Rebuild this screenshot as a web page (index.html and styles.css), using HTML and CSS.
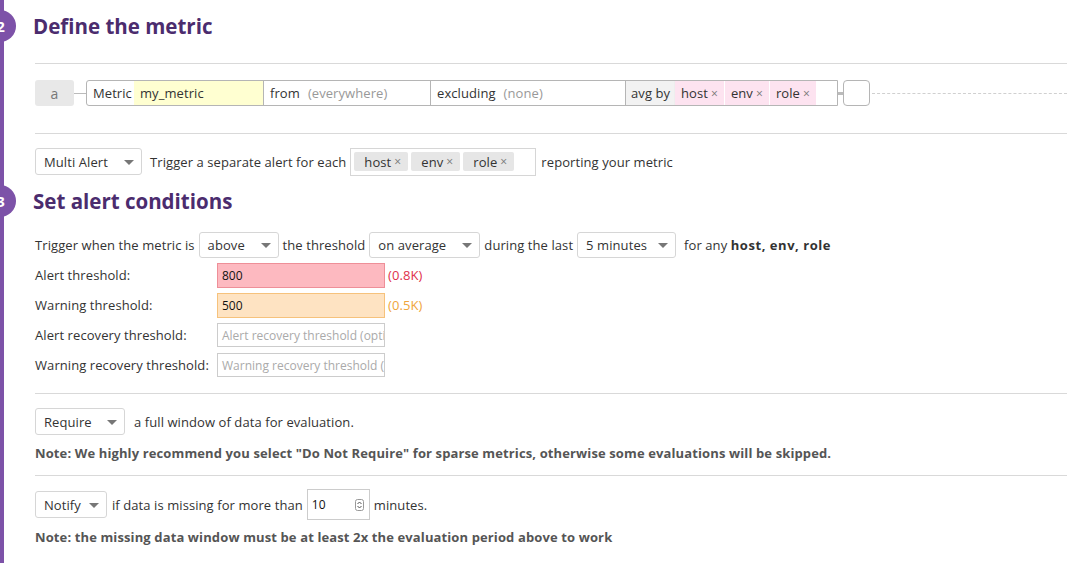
FILE: index.html
```html
<!DOCTYPE html>
<html>
<head>
<meta charset="utf-8">
<link rel="stylesheet" href="styles.css">
</head>
<body>
<div class="page">
  <div class="section-head head-1">
    <span class="step">2</span>
    <h2>Define the metric</h2>
  </div>
  <hr class="rule rule-1">
  <div class="metric-row">
    <span class="query-letter">a</span>
    <span class="link"></span>
    <div class="query">
      <div class="seg seg-metric"><span class="kw">Metric</span><span class="metric-val">my_metric</span></div>
      <div class="seg seg-from"><span class="kw">from</span><span class="ph">(everywhere)</span></div>
      <div class="seg seg-excl"><span class="kw">excluding</span><span class="ph">(none)</span></div>
      <div class="seg seg-avg"><span class="avg-kw">avg by</span><span class="ptag">host <i>×</i></span><span class="ptag">env <i>×</i></span><span class="ptag">role <i>×</i></span></div>
    </div>
    <span class="link link-short"></span>
    <span class="func-box"></span>
    <span class="dash"></span>
  </div>
  <hr class="rule rule-2">
  <div class="row multi-row">
    <div class="select sel-multi">Multi Alert<span class="caret"></span></div>
    <span class="txt">Trigger a separate alert for each</span>
    <div class="tagbox"><span class="gtag">host <i>×</i></span><span class="gtag">env <i>×</i></span><span class="gtag">role <i>×</i></span></div>
    <span class="txt">reporting your metric</span>
  </div>
  <div class="section-head head-2">
    <span class="step">3</span>
    <h2>Set alert conditions</h2>
  </div>
  <div class="row cond-row">
    <span class="txt">Trigger when the metric is</span>
    <div class="select sel-above">above<span class="caret"></span></div>
    <span class="txt">the threshold</span>
    <div class="select sel-avg">on average<span class="caret"></span></div>
    <span class="txt">during the last</span>
    <div class="select sel-min">5 minutes<span class="caret"></span></div>
    <span class="txt">for any <b>host, env, role</b></span>
  </div>
  <div class="thr-row">
    <span class="thr-label">Alert threshold:</span>
    <div class="thr-input thr-alert">800</div>
    <span class="thr-hint hint-alert">(0.8K)</span>
  </div>
  <div class="thr-row">
    <span class="thr-label">Warning threshold:</span>
    <div class="thr-input thr-warn">500</div>
    <span class="thr-hint hint-warn">(0.5K)</span>
  </div>
  <div class="thr-row">
    <span class="thr-label">Alert recovery threshold:</span>
    <div class="thr-input thr-empty">Alert recovery threshold (optional)</div>
  </div>
  <div class="thr-row">
    <span class="thr-label">Warning recovery threshold:</span>
    <div class="thr-input thr-empty">Warning recovery threshold (optional)</div>
  </div>
  <hr class="rule rule-3">
  <div class="row req-row">
    <div class="select sel-req">Require<span class="caret"></span></div>
    <span class="txt txt-wide">a full window of data for evaluation.</span>
  </div>
  <p class="note note-1">Note: We highly recommend you select "Do Not Require" for sparse metrics, otherwise some evaluations will be skipped.</p>
  <hr class="rule rule-4">
  <div class="row notify-row">
    <div class="select sel-notify">Notify<span class="caret"></span></div>
    <span class="txt">if data is missing for more than</span>
    <div class="num-input">10<span class="spin"><svg width="9" height="12" viewBox="0 0 9 12"><rect x="0.5" y="0.5" width="8" height="11" rx="2" fill="#fff" stroke="#999"/><path d="M2.5 5L4.5 3L6.5 5" fill="none" stroke="#555" stroke-width="1"/><path d="M2.5 7L4.5 9L6.5 7" fill="none" stroke="#555" stroke-width="1"/></svg></span></div>
    <span class="txt">minutes.</span>
  </div>
  <p class="note note-2">Note: the missing data window must be at least 2x the evaluation period above to work</p>
</div>
</body>
</html>
```

FILE: styles.css
```css
* { box-sizing: border-box; }
html, body { margin: 0; padding: 0; background: #fff; }
body {
  font-family: "Open Sans", "Liberation Sans", sans-serif;
  font-size: 13px;
  letter-spacing: 0.08px;
  color: #333;
  overflow: hidden;
}
.page {
  border-left: 4px solid #7d52a8;
  min-height: 563px;
  padding-left: 31px;
  padding-top: 11px;
}
.section-head {
  position: relative;
  height: 30px;
  display: flex;
  align-items: center;
}
.section-head h2 {
  margin: 0 0 0 -2px;
  font-size: 20.5px;
  letter-spacing: 0;
  font-weight: 700;
  color: #4b2c6e;
  line-height: 30px;
}
.step {
  position: absolute;
  left: -51px;
  top: -1px;
  width: 32px;
  height: 32px;
  border-radius: 50%;
  background: #7d52a8;
  color: #fff;
  font-weight: 700;
  font-size: 15px;
  display: flex;
  align-items: center;
  justify-content: flex-end;
  padding-right: 11px;
}
.rule {
  border: 0;
  border-top: 1px solid #d9d9d9;
  margin: 0;
  height: 0;
}
.rule-1 { margin-top: 22px; }
.metric-row {
  margin-top: 16px;
  height: 26px;
  display: flex;
  align-items: center;
}
.query-letter {
  width: 39px;
  height: 26px;
  background: #e8e8e8;
  border-radius: 3px;
  color: #777;
  font-size: 14px;
  display: flex;
  align-items: center;
  justify-content: center;
}
.link {
  width: 12px;
  height: 1px;
  background: #bbb;
}
.query {
  display: flex;
  height: 26px;
  width: 752px;
  border: 1px solid #b5b5b5;
  border-radius: 3px 0 0 3px;
  overflow: hidden;
}
.seg {
  display: flex;
  align-items: center;
  height: 100%;
  border-right: 1px solid #b5b5b5;
  white-space: nowrap;
}
.kw { padding-left: 6px; color: #333; }
.ph { color: #999; margin-left: 8px; }
.seg-metric { width: 177px; }
.seg-metric .kw { width: 47px; }
.metric-val {
  background: #ffffd1;
  height: 100%;
  flex: 1;
  display: flex;
  align-items: center;
  padding-left: 6px;
}
.seg-from { width: 167px; }
.seg-excl { width: 195px; }
.seg-avg { flex: 1; border-right: 0; }
.avg-kw {
  background: #f2f2f2;
  height: 100%;
  width: 49px;
  display: flex;
  align-items: center;
  padding-left: 5px;
  border-right: 1px solid #eee;
}
.ptag {
  background: #fde3f0;
  height: 100%;
  display: flex;
  align-items: center;
  padding: 0 6px 0 6px;
  border-right: 1px solid #fff;
}
.ptag i, .gtag i {
  font-style: normal;
  color: #777;
  font-size: 12px;
  margin-left: 3px;
}
.link-short {
  width: 5px;
  height: 3px;
  background: #bbb;
}
.func-box {
  width: 27px;
  height: 26px;
  border: 1px solid #b5b5b5;
  border-radius: 4px;
}
.dash {
  flex: 1;
  height: 0;
  border-top: 1px dashed #d0d0d0;
  margin-left: 2px;
}
.rule-2 { margin-top: 27px; }
.row {
  display: flex;
  align-items: center;
}
.txt { margin-left: 8px; white-space: nowrap; }
.txt b { font-weight: 700; letter-spacing: 0.55px; }
.select {
  position: relative;
  height: 27px;
  border: 1px solid #d6d6d6;
  border-radius: 3px;
  background: #fff;
  display: flex;
  align-items: center;
  padding-left: 8px;
  white-space: nowrap;
}
.caret {
  position: absolute;
  right: 7px;
  top: 50%;
  margin-top: -2px;
  width: 0;
  height: 0;
  border-left: 5px solid transparent;
  border-right: 5px solid transparent;
  border-top: 5px solid #777;
}
.multi-row { margin-top: 13px; height: 29px; }
.sel-multi { width: 107px; }
.tagbox {
  margin-left: 4px;
  width: 186px;
  height: 28px;
  border: 1px solid #d6d6d6;
  display: flex;
  align-items: center;
  padding-left: 3px;
}
.gtag {
  background: #e6e6e6;
  border-radius: 2px;
  height: 19px;
  display: flex;
  align-items: center;
  padding: 0 7px 0 10px;
  margin-right: 3px;
}
.multi-row .tagbox + .txt { margin-left: 5px; }
.head-2 { margin-top: 10px; }
.cond-row { margin-top: 14px; height: 30px; }
.cond-row .txt:first-child { margin-left: 0; }
.cond-row .select { height: 26px; margin-left: 4px; }
.cond-row .select + .txt { margin-left: 4px; }
.sel-above { width: 80px; }
.sel-avg { width: 111px; }
.sel-min { width: 99px; }
.cond-row .sel-min + .txt { margin-left: 8px; }
.thr-row {
  display: flex;
  align-items: center;
  height: 30px;
}
.thr-label { width: 182px; white-space: nowrap; }
.thr-input {
  width: 168px;
  height: 25px;
  border: 1px solid #ccc;
  display: flex;
  align-items: center;
  padding-left: 4px;
  font-size: 12px;
  letter-spacing: 0;
  color: #111;
  white-space: nowrap;
  overflow: hidden;
}
.thr-alert { background: #fdb9c0; border-color: #ee8f98; }
.thr-warn { background: #fee3c2; border-color: #f6c27c; }
.thr-empty { color: #aaa; background: #fff; height: 24px; }
.thr-hint { margin-left: 3px; font-size: 13px; }
.hint-alert { color: #e0314b; }
.hint-warn { color: #f0a53a; }
.rule-3 { margin-top: 13px; }
.req-row { margin-top: 13px; height: 29px; }
.sel-req { width: 90px; }
.txt-wide { margin-left: 9px; }
.note {
  margin: 0;
  font-weight: 700;
  font-size: 13px;
  letter-spacing: 0.12px;
  color: #555;
  line-height: 20px;
  white-space: nowrap;
}
.note-1 { margin-top: 7px; }
.rule-4 { margin-top: 12px; }
.notify-row { margin-top: 13px; height: 31px; }
.sel-notify { width: 72px; height: 27px; }
.sel-notify + .txt { margin-left: 5px; }
.num-input {
  position: relative;
  margin-left: 4px;
  width: 63px;
  height: 31px;
  border: 1px solid #ccc;
  display: flex;
  align-items: center;
  padding-left: 4px;
  font-size: 12px;
  color: #111;
}
.spin {
  position: absolute;
  right: 5px;
  top: 9px;
  display: flex;
}
.num-input + .txt { margin-left: 4px; }
.note-2 { margin-top: 7px; }
```
